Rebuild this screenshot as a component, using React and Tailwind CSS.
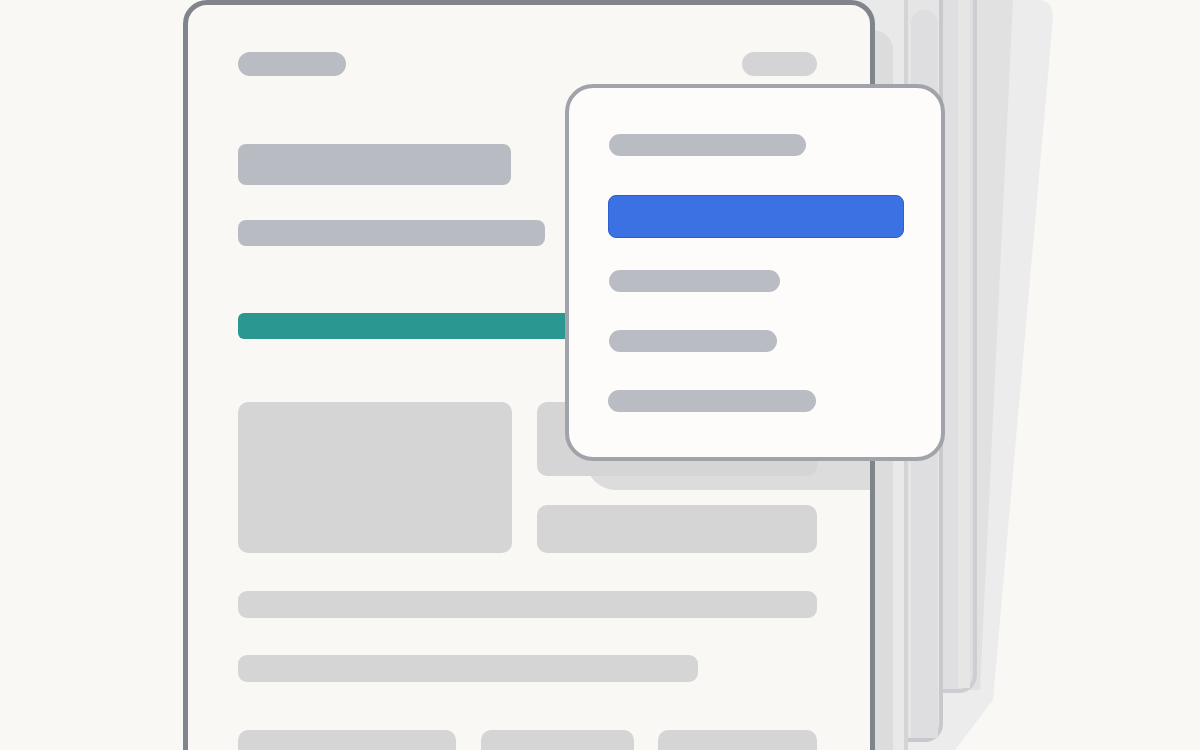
import React from "react";

function Bar({ className }) {
  return <div className={className} />;
}

export default function App() {
  return (
    <div className="relative w-[1200px] h-[750px] overflow-hidden bg-[#faf8f4]" style={{ fontFamily: "Inter, sans-serif" }}>
      {/* slanted back sheet */}
      <svg className="absolute left-[860px] top-0" width="200" height="750" viewBox="0 0 200 750">
        <path d="M0 0 L178 0 Q193 0 193 18 L133 700 L95 750 L0 750 Z" fill="#ececec" />
        <path d="M0 0 L153 0 L120 690 L0 690 Z" fill="#e1e1e2" />
      </svg>
      {/* sheet C */}
      <div className="absolute left-[880px] top-[-30px] w-[97px] h-[723px] bg-[#dfdfe1] border-r-4 border-b-4 border-[#cdced1] rounded-br-[18px]" />
      <div className="absolute left-[958px] top-0 w-[12px] h-[688px] bg-[#e6e6e7]" />
      {/* sheet B */}
      <div className="absolute left-[860px] top-[-30px] w-[83px] h-[772px] bg-[#e5e5e6] border-r-4 border-b-4 border-[#c8c9cc] rounded-br-[18px]" />
      <div className="absolute left-[911px] top-[10px] w-[27px] h-[728px] bg-[#dedee0] rounded-t-[14px]" />
      {/* sheet A */}
      <div className="absolute left-[850px] top-[-30px] w-[58px] h-[820px] bg-[#e9e9ea] border-r-[4px] border-[#d3d4d6]" />
      <div className="absolute left-[850px] top-[30px] w-[43px] h-[760px] bg-[#dcdcdd] rounded-tr-[20px]" />

      {/* main page */}
      <div className="absolute left-[183px] top-0 w-[692px] h-[820px] rounded-[24px] border-[5px] border-[#80848b] bg-[#f9f8f4] overflow-hidden">
        {/* popup shadow */}
        <div className="absolute left-[398px] top-[100px] w-[400px] h-[385px] bg-[#dcdcdd] rounded-bl-[30px]" />
        <div className="relative flex flex-col pl-[50px] pr-[53px] pt-[47px]">
          <div className="flex justify-between">
            <Bar className="w-[108px] h-[24px] rounded-full bg-[#b9bcc2]" />
            <Bar className="w-[75px] h-[24px] rounded-full bg-[#d4d4d6]" />
          </div>
          <Bar className="mt-[68px] w-[273px] h-[41px] rounded-[8px] bg-[#b8bbc2]" />
          <Bar className="mt-[35px] w-[307px] h-[26px] rounded-[8px] bg-[#b8bbc2]" />
          <Bar className="mt-[67px] w-[345px] h-[26px] rounded-[6px] bg-[#2a9790]" />
          <div className="mt-[63px] flex gap-[25px]">
            <Bar className="w-[274px] h-[151px] rounded-[10px] bg-[#d5d5d6]" />
            <div className="flex flex-col gap-[29px] w-[281px]">
              <Bar className="h-[74px] rounded-[10px] bg-[#d5d5d6]" />
              <Bar className="h-[48px] rounded-[10px] bg-[#d5d5d6]" />
            </div>
          </div>
          <Bar className="mt-[38px] h-[27px] rounded-[9px] bg-[#d5d5d6]" />
          <Bar className="mt-[37px] w-[460px] h-[27px] rounded-[9px] bg-[#d5d5d6]" />
          <div className="mt-[48px] flex">
            <Bar className="w-[218px] h-[60px] rounded-[10px] bg-[#d5d5d6]" />
            <Bar className="ml-[25px] w-[154px] h-[60px] rounded-[10px] bg-[#d5d5d6]" />
            <Bar className="ml-[24px] w-[159px] h-[60px] rounded-[10px] bg-[#d5d5d6]" />
          </div>
        </div>
      </div>

      {/* popup */}
      <div className="absolute left-[565px] top-[84px] w-[380px] h-[377px] rounded-[28px] border-4 border-[#a0a3a9] bg-[#fdfcfa] flex flex-col pl-[40px] pr-[37px] pt-[46px]">
        <Bar className="w-[197px] h-[22px] rounded-full bg-[#b9bcc2]" />
        <Bar className="mt-[39px] -ml-px w-[296px] h-[43px] rounded-[8px] bg-[#3b71e2] border border-[#2d5fd0]" />
        <Bar className="mt-[32px] w-[171px] h-[22px] rounded-full bg-[#b9bcc2]" />
        <Bar className="mt-[38px] w-[168px] h-[22px] rounded-full bg-[#b9bcc2]" />
        <Bar className="mt-[38px] -ml-px w-[208px] h-[22px] rounded-full bg-[#b9bcc2]" />
      </div>
    </div>
  );
}
